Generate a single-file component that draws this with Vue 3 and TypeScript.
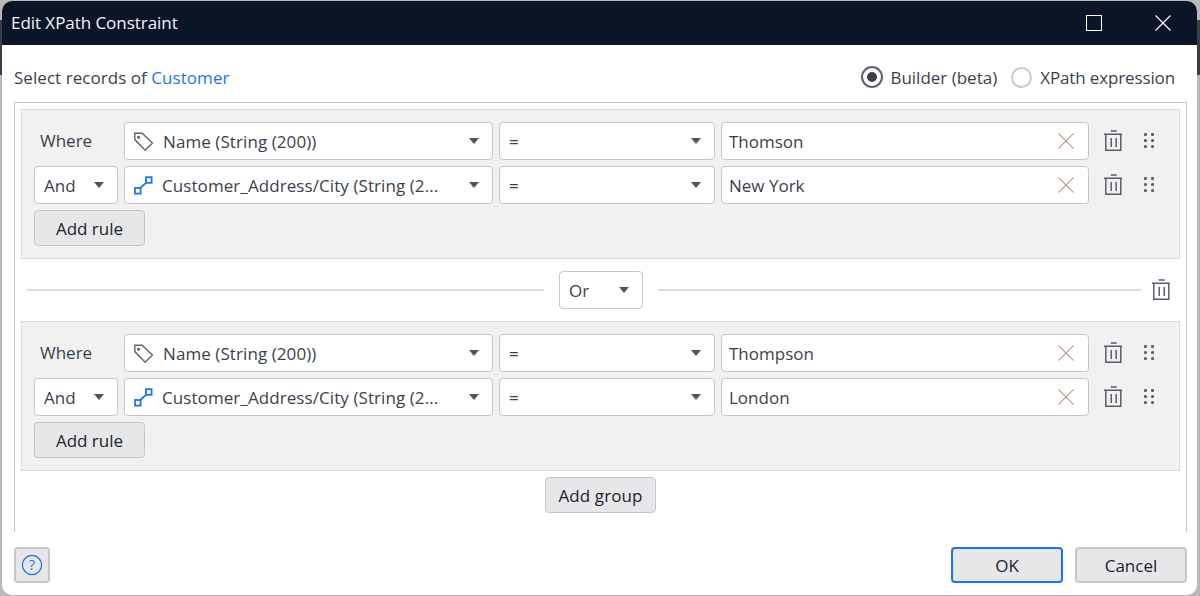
<script setup lang="ts">
interface Rule { lead: string; icon: 'tag' | 'path'; field: string; value: string }
interface Group { rules: Rule[] }
const groups: Group[] = [
  { rules: [
    { lead: 'Where', icon: 'tag', field: 'Name (String (200))', value: 'Thomson' },
    { lead: 'And', icon: 'path', field: 'Customer_Address/City (String (2...', value: 'New York' },
  ] },
  { rules: [
    { lead: 'Where', icon: 'tag', field: 'Name (String (200))', value: 'Thompson' },
    { lead: 'And', icon: 'path', field: 'Customer_Address/City (String (2...', value: 'London' },
  ] },
]
const dots = [[1.5,1.5],[8.5,1.5],[1.5,7.5],[8.5,7.5],[1.5,13.5],[8.5,13.5]]
</script>

<template>
  <div class="page">
    <div class="window">
      <header class="titlebar">
        <span class="title">Edit XPath Constraint</span>
        <div class="winbtns">
          <svg width="16" height="16" viewBox="0 0 16 16"><rect x="0.5" y="0.5" width="15" height="15" fill="none" stroke="#fff"/></svg>
          <svg width="16" height="16" viewBox="0 0 16 16"><path d="M0.5 0.5L15.5 15.5M15.5 0.5L0.5 15.5" stroke="#fff" stroke-width="1.1"/></svg>
        </div>
      </header>
      <div class="top">
        <div class="records">Select records of <a class="link">Customer</a></div>
        <div class="radios">
          <span class="radio on"><i></i></span><span class="rlabel first">Builder (beta)</span>
          <span class="radio"></span><span class="rlabel second">XPath expression</span>
        </div>
      </div>
      <div class="panel">
        <template v-for="(g, gi) in groups" :key="gi">
          <div v-if="gi === 1" class="divider">
            <span class="line left"></span>
            <div class="select or"><span>Or</span><span class="caret"></span></div>
            <span class="line right"></span>
            <button class="icon-btn solo" aria-label="Delete group">
              <svg width="20" height="22" viewBox="0 0 20 22" fill="none" stroke="#5a5d6b" stroke-width="1.5"><path d="M7.7 1H13.7M1 4.2H19M2.8 4.2V20.3H17.8V4.2M8.2 8V17M13.2 8V17"/></svg>
            </button>
          </div>
          <section class="group">
            <div v-for="(r, ri) in g.rules" :key="ri" class="row">
              <div v-if="r.lead === 'Where'" class="where">Where</div>
              <div v-else class="select and"><span>And</span><span class="caret"></span></div>
              <div class="select field">
                <svg v-if="r.icon === 'tag'" class="ficon tag" width="20" height="20" viewBox="0 0 20 20" fill="none" stroke="#5f626e" stroke-width="1.4"><path d="M0.8 2.2H8.2L18.4 12L11.2 19.2L0.8 8.6ZM4.6 5.4A0.9 0.9 0 1 1 4.5 5.4"/></svg>
                <svg v-else class="ficon" width="20" height="20" viewBox="0 0 20 20" fill="none" stroke="#1f74ea" stroke-width="1.8"><rect x="1" y="13" width="5.6" height="5.6"/><rect x="12" y="2.2" width="5.6" height="5.6"/><path d="M6.2 13L12 7.8"/></svg>
                <span class="ftext">{{ r.field }}</span><span class="caret"></span>
              </div>
              <div class="select op"><span>=</span><span class="caret"></span></div>
              <div class="input">
                <span>{{ r.value }}</span>
                <svg width="16" height="16" viewBox="0 0 16 16"><path d="M0.5 0.5L15.5 15.5M15.5 0.5L0.5 15.5" stroke="#b9756f" stroke-width="1.05"/></svg>
              </div>
              <button class="icon-btn" aria-label="Delete rule">
                <svg width="20" height="22" viewBox="0 0 20 22" fill="none" stroke="#5a5d6b" stroke-width="1.5"><path d="M7.7 1H13.7M1 4.2H19M2.8 4.2V20.3H17.8V4.2M8.2 8V17M13.2 8V17"/></svg>
              </button>
              <svg class="grip" width="10" height="16" viewBox="0 0 10 16"><circle v-for="(d, i) in dots" :key="i" :cx="d[0]" :cy="d[1]" r="1.6" fill="#5f626e"/></svg>
            </div>
            <button class="btn add-rule">Add rule</button>
          </section>
        </template>
        <div class="addgroup"><button class="btn">Add group</button></div>
      </div>
      <footer class="footer">
        <button class="btn help" aria-label="Help">
          <svg width="22" height="22" viewBox="0 0 22 22"><circle cx="11" cy="11" r="9.6" fill="none" stroke="#1f74ea" stroke-width="1.3"/><text x="11" y="16" text-anchor="middle" font-size="14" fill="#1f74ea" font-family="Open Sans, sans-serif">?</text></svg>
        </button>
        <div class="actions">
          <button class="btn primary">OK</button>
          <button class="btn thick">Cancel</button>
        </div>
      </footer>
    </div>
  </div>
</template>

<style>
html, body { margin: 0; background: #fff; }
</style>

<style scoped>
* { box-sizing: border-box; }
.page {
  width: 1200px; height: 596px; overflow: hidden;
  background: linear-gradient(#b9b9bb 20px, #3a3d45 20px, #3a3d45 75px, #b9b9bb 75px);
  padding: 1px 3px 1px 2px;
  font-family: "Open Sans", "Noto Sans", sans-serif;
  font-size: 17px;
  color: #3b3f4c;
}
.window { height: 594px; background: #fff; border-radius: 10px; overflow: hidden; display: flex; flex-direction: column; }
.titlebar { height: 44px; flex: none; background: #0a1628; color: #fff; display: flex; align-items: center; justify-content: space-between; padding: 0 26px 1px 9px; }
.title { font-size: 17px; color: #f3f4f6; letter-spacing: -0.05px; }
.winbtns { display: flex; gap: 53px; align-items: center; padding-top: 1px; }
.top { height: 57px; flex: none; display: flex; align-items: center; justify-content: space-between; padding: 7px 22px 0 12px; }
.records { letter-spacing: 0.05px; }
.link { color: #1b74f0; }
.radios { display: flex; align-items: center; }
.radio { width: 21px; height: 21px; border: 2px solid #c9c9ce; border-radius: 50%; display: flex; align-items: center; justify-content: center; margin-right: 8px; background: #fff; }
.radio.on { border-color: #5f626e; width: 22px; height: 22px; margin-right: 7px; }
.radio.on i { width: 10px; height: 10px; background: #3b3f4c; border-radius: 50%; }
.rlabel.first { margin-right: 14px; }
.rlabel.second { letter-spacing: -0.13px; }
.panel { margin: 0 10px 0 12px; height: 430px; flex: none; border: 1px solid #c6c6cc; border-bottom: 0; padding: 6px 6px 0; display: flex; flex-direction: column; }
.group { height: 150px; flex: none; background: #f1f1f1; border: 1px solid #dcdcdc; padding: 12px 0 0 12px; }
.row { display: flex; align-items: center; height: 38px; margin-bottom: 6px; }
.where { width: 84px; margin-right: 6px; padding: 0 0 2px 6px; }
.select { height: 38px; border: 1px solid #c6c6cc; border-radius: 4px; background: #fff; display: flex; align-items: center; justify-content: space-between; padding: 0 13px 0 9px; margin-right: 6px; }
.and { width: 84px; }
.field { width: 369px; justify-content: flex-start; padding-right: 13px; }
.ficon { flex: none; margin-right: 8px; }
.ficon.tag { margin-right: 9px; }
.ftext { flex: 1; white-space: nowrap; overflow: hidden; letter-spacing: 0.08px; }
.op { width: 216px; }
.caret { width: 0; height: 0; border-left: 5px solid transparent; border-right: 5px solid transparent; border-top: 6px solid #505360; flex: none; }
.input { width: 368px; height: 38px; border: 1px solid #c6c6cc; border-radius: 4px; background: #fff; display: flex; align-items: center; justify-content: space-between; padding: 0 14px 0 7px; }
.icon-btn { border: 0; background: none; padding: 0; width: 20px; height: 22px; margin-left: 14px; display: flex; }
.grip { margin-left: 21px; flex: none; }
.btn { height: 36px; border: 1px solid #c6c6cc; border-radius: 4px; background: #e7e7ea; font: inherit; color: #20232e; padding: 0; }
.add-rule { width: 111px; display: block; }
.divider { height: 62px; flex: none; display: flex; align-items: center; position: relative; }
.line { height: 2px; background: #dcdcdc; }
.line.left { width: 517px; margin-left: 6px; margin-right: 15px; }
.or { width: 84px; margin-right: 15px; }
.line.right { width: 483px; }
.icon-btn.solo { margin-left: 10px; }
.addgroup { display: flex; justify-content: center; padding-top: 6px; }
.addgroup .btn { width: 111px; letter-spacing: 0.1px; }
.footer { flex: 1; display: flex; justify-content: space-between; align-items: flex-start; padding: 15px 10px 0 12px; }
.help { width: 36px; display: flex; align-items: center; justify-content: center; border-width: 2px; }
.actions { display: flex; gap: 12px; }
.actions .btn { width: 112px; }
.primary { border: 2px solid #1b74f0; }
.thick { border-width: 2px; }
</style>
